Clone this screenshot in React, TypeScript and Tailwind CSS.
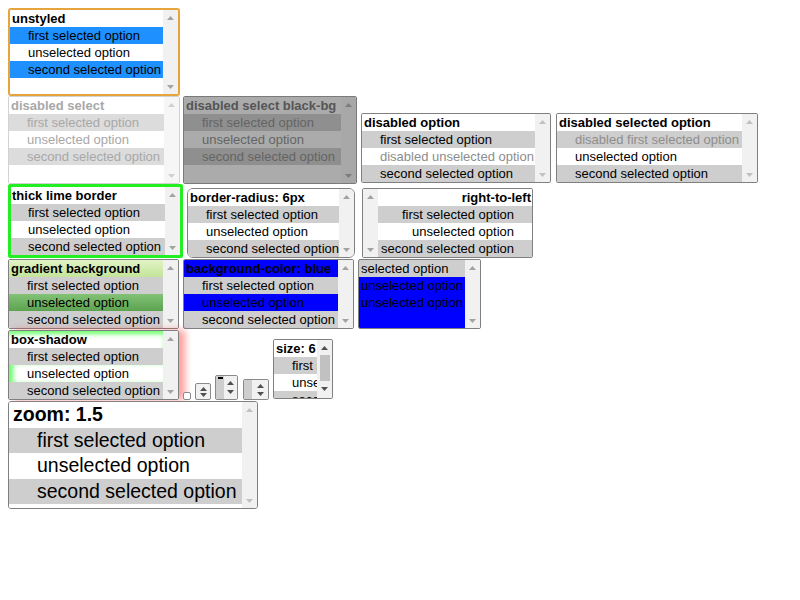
type Row = { t: string; label?: boolean; c?: string };

const sel = "bg-[#cecece]";

const std = (label: string, c1 = sel, c2 = "", c3 = sel): Row[] => [
  { t: label, label: true },
  { t: "first selected option", c: c1 },
  { t: "unselected option", c: c2 },
  { t: "second selected option", c: c3 },
];

function Arrow({ up, cls }: { up?: boolean; cls: string }) {
  return (
    <svg width="7" height="4" viewBox="0 0 7 4" className="block">
      <path d={up ? "M3.5 0L7 4H0z" : "M0 0h7L3.5 4z"} className={cls} />
    </svg>
  );
}

function Bar({ bg = "bg-[#f1f1f1]", arrow = "fill-[#a3a3a3]" }: { bg?: string; arrow?: string }) {
  return (
    <div className={`flex w-[15px] shrink-0 flex-col justify-between ${bg}`}>
      <div className="flex h-[15px] items-center justify-center">
        <Arrow up cls={arrow} />
      </div>
      <div className="flex h-[15px] items-center justify-center">
        <Arrow cls={arrow} />
      </div>
    </div>
  );
}

function ListBox({
  box,
  rows,
  content = "bg-white",
  bar,
  rtl,
  rowCls = "h-[17px] leading-[17px]",
  labelPad = "pl-[2px]",
  optPad = "pl-[18px]",
}: {
  box: string;
  rows: Row[];
  content?: string;
  bar?: React.ReactNode;
  rtl?: boolean;
  rowCls?: string;
  labelPad?: string;
  optPad?: string;
}) {
  const sb = bar ?? <Bar />;
  return (
    <div className={`flex shrink-0 overflow-hidden ${box}`}>
      {rtl && sb}
      <div className={`min-w-0 flex-1 overflow-hidden ${content}`}>
        {rows.map((r, i) => (
          <div
            key={i}
            className={`${rowCls} overflow-hidden whitespace-nowrap ${rtl ? "text-right" : ""} ${
              r.label ? `font-bold ${labelPad}` : optPad
            } ${r.c ?? ""}`}
          >
            {r.t}
          </div>
        ))}
      </div>
      {!rtl && sb}
    </div>
  );
}

const base = "h-[70px] rounded-[2px] border border-[#808080]";

export default function App() {
  return (
    <div className="min-h-screen bg-white p-2 font-['Liberation_Sans',Arial,sans-serif] text-[13px] text-black">
      <div className="flex flex-col items-start">
        {/* row 1 */}
        <ListBox
          box="h-[88px] w-[172px] rounded-[3px] border-2 border-[#e5a43c]"
          rows={[...std("unstyled", "bg-[#1e90ff]", "", "bg-[#1e90ff]"), { t: "" }]}
        />

        {/* row 2 */}
        <div className="flex items-end">
          <ListBox
            box="h-[88px] w-[172px] rounded-[2px] border border-[#d2d2d2]"
            content="bg-white text-[#a8a8a8]"
            rows={[...std("disabled select", "bg-[#dcdcdc]", "", "bg-[#dcdcdc]"), { t: "" }]}
            bar={<Bar bg="bg-[#f6f6f6]" arrow="fill-[#d0d0d0]" />}
          />
          <ListBox
            box="ml-[3px] h-[88px] w-[174px] rounded-[2px] border border-[#7a7a7a]"
            content="bg-[#ababab] text-[#646464]"
            rows={[
              { t: "disabled select black-bg", label: true, c: "text-[#555555]" },
              { t: "first selected option", c: "bg-[#8f8f8f]" },
              { t: "unselected option" },
              { t: "second selected option", c: "bg-[#8f8f8f]" },
              { t: "" },
            ]}
            bar={<Bar bg="bg-[#a8a8a8]" arrow="fill-[#7c7c7c]" />}
          />
          <ListBox
            box={`ml-[4px] mb-[1px] w-[190px] ${base}`}
            rows={[
              { t: "disabled option", label: true },
              { t: "first selected option", c: sel },
              { t: "disabled unselected option", c: "text-[#8d8d8d]" },
              { t: "second selected option", c: sel },
            ]}
            bar={<Bar arrow="fill-[#c0c0c0]" />}
          />
          <ListBox
            box={`ml-[5px] mb-[1px] w-[202px] ${base}`}
            rows={[
              { t: "disabled selected option", label: true },
              { t: "disabled first selected option", c: `${sel} text-[#8d8d8d]` },
              { t: "unselected option" },
              { t: "second selected option", c: sel },
            ]}
            bar={<Bar arrow="fill-[#c0c0c0]" />}
          />
        </div>

        {/* row 3 */}
        <div className="flex items-end">
          <ListBox
            box="h-[74px] w-[175px] rounded-[2px] border-[3px] border-[#22ee22]"
            rows={std("thick lime border")}
            labelPad="pl-[1px]"
            optPad="pl-[17px]"
          />
          <ListBox box="ml-[4px] h-[70px] w-[168px] rounded-[6px] border border-[#808080]" rows={std("border-radius: 6px")} />
          <ListBox
            box={`ml-[7px] w-[171px] ${base}`}
            rtl
            rows={std("right-to-left")}
            labelPad="pr-[1px]"
            optPad="pr-[18px]"
          />
        </div>

        {/* row 4 */}
        <div className="mt-[1px] flex items-end">
          <ListBox
            box={`w-[171px] ${base}`}
            rows={[
              { t: "gradient background", label: true, c: "bg-gradient-to-b from-[#e2f3c6] to-[#c3e499]" },
              { t: "first selected option", c: sel },
              { t: "unselected option", c: "bg-gradient-to-b from-[#82c276] to-[#5ca350]" },
              { t: "second selected option", c: sel },
            ]}
          />
          <ListBox
            box={`ml-[4px] w-[171px] ${base}`}
            content="bg-[#0000ff]"
            rows={std("background-color: blue")}
          />
          <ListBox
            box={`ml-[4px] w-[123px] ${base}`}
            content="bg-[#0000ff]"
            labelPad="pl-[2px]"
            optPad="pl-[2px]"
            rows={[
              { t: "selected option", c: sel },
              { t: "unselected option" },
              { t: "unselected option" },
            ]}
          />
        </div>

        {/* row 5 */}
        <div className="mt-[1px] flex items-end">
          <ListBox
            box={`w-[171px] ${base} shadow-[6px_0_7px_rgba(255,40,40,0.45)]`}
            rows={[
              { t: "box-shadow", label: true, c: "shadow-[inset_0_5px_5px_-2px_#66ff66]" },
              { t: "first selected option", c: sel },
              { t: "unselected option", c: "shadow-[inset_6px_0_5px_-2px_#66ff66]" },
              { t: "second selected option", c: sel },
            ]}
          />
          <div className="ml-[4px] h-[8px] w-[8px] rounded-[2px] border border-[#8a8a8a] bg-white" />
          <div className="ml-[4px] flex h-[17px] w-[16px] flex-col items-center justify-center gap-[2px] rounded-[2px] border border-[#8a8a8a] bg-[#f1f1f1]">
            <Arrow up cls="fill-[#505050]" />
            <Arrow cls="fill-[#505050]" />
          </div>
          <div className="ml-[4px] flex h-[25px] w-[23px] overflow-hidden rounded-[2px] border border-[#8a8a8a]">
            <div className="w-[8px] bg-[#cecece] pl-[2px] pt-[1px]">
              <div className="h-[2px] w-[5px] bg-black" />
            </div>
            <div className="flex flex-1 flex-col items-center justify-center gap-[5px] bg-[#f1f1f1]">
              <Arrow up cls="fill-[#505050]" />
              <Arrow cls="fill-[#505050]" />
            </div>
          </div>
          <div className="ml-[5px] flex h-[21px] w-[26px] overflow-hidden rounded-[2px] border border-[#8a8a8a]">
            <div className="w-[8px] bg-[#cecece]" />
            <div className="flex flex-1 flex-col items-center justify-center gap-[4px] bg-[#f1f1f1]">
              <Arrow up cls="fill-[#505050]" />
              <Arrow cls="fill-[#505050]" />
            </div>
          </div>
          <ListBox
            box="ml-[4px] mb-[1px] h-[60px] w-[60px] rounded-[2px] border border-[#808080]"
            rows={[...std("size: 6")]}
            bar={
              <div className="flex w-[15px] shrink-0 flex-col bg-[#f1f1f1]">
                <div className="flex h-[15px] items-center justify-center">
                  <Arrow up cls="fill-[#505050]" />
                </div>
                <div className="mx-auto h-[26px] w-[10px] bg-[#c1c1c1]" />
                <div className="flex h-[15px] items-center justify-center">
                  <Arrow cls="fill-[#505050]" />
                </div>
              </div>
            }
          />
        </div>

        {/* row 6: zoom 1.5 */}
        <ListBox
          box="mt-[1px] h-[108px] w-[250px] rounded-[3px] border-[1.5px] border-[#808080] text-[19.5px]"
          rowCls="h-[25.5px] leading-[25.5px]"
          labelPad="pl-[4px]"
          optPad="pl-[28px]"
          rows={std("zoom: 1.5")}
          bar={<Bar arrow="fill-[#c0c0c0]" />}
        />
      </div>
    </div>
  );
}
